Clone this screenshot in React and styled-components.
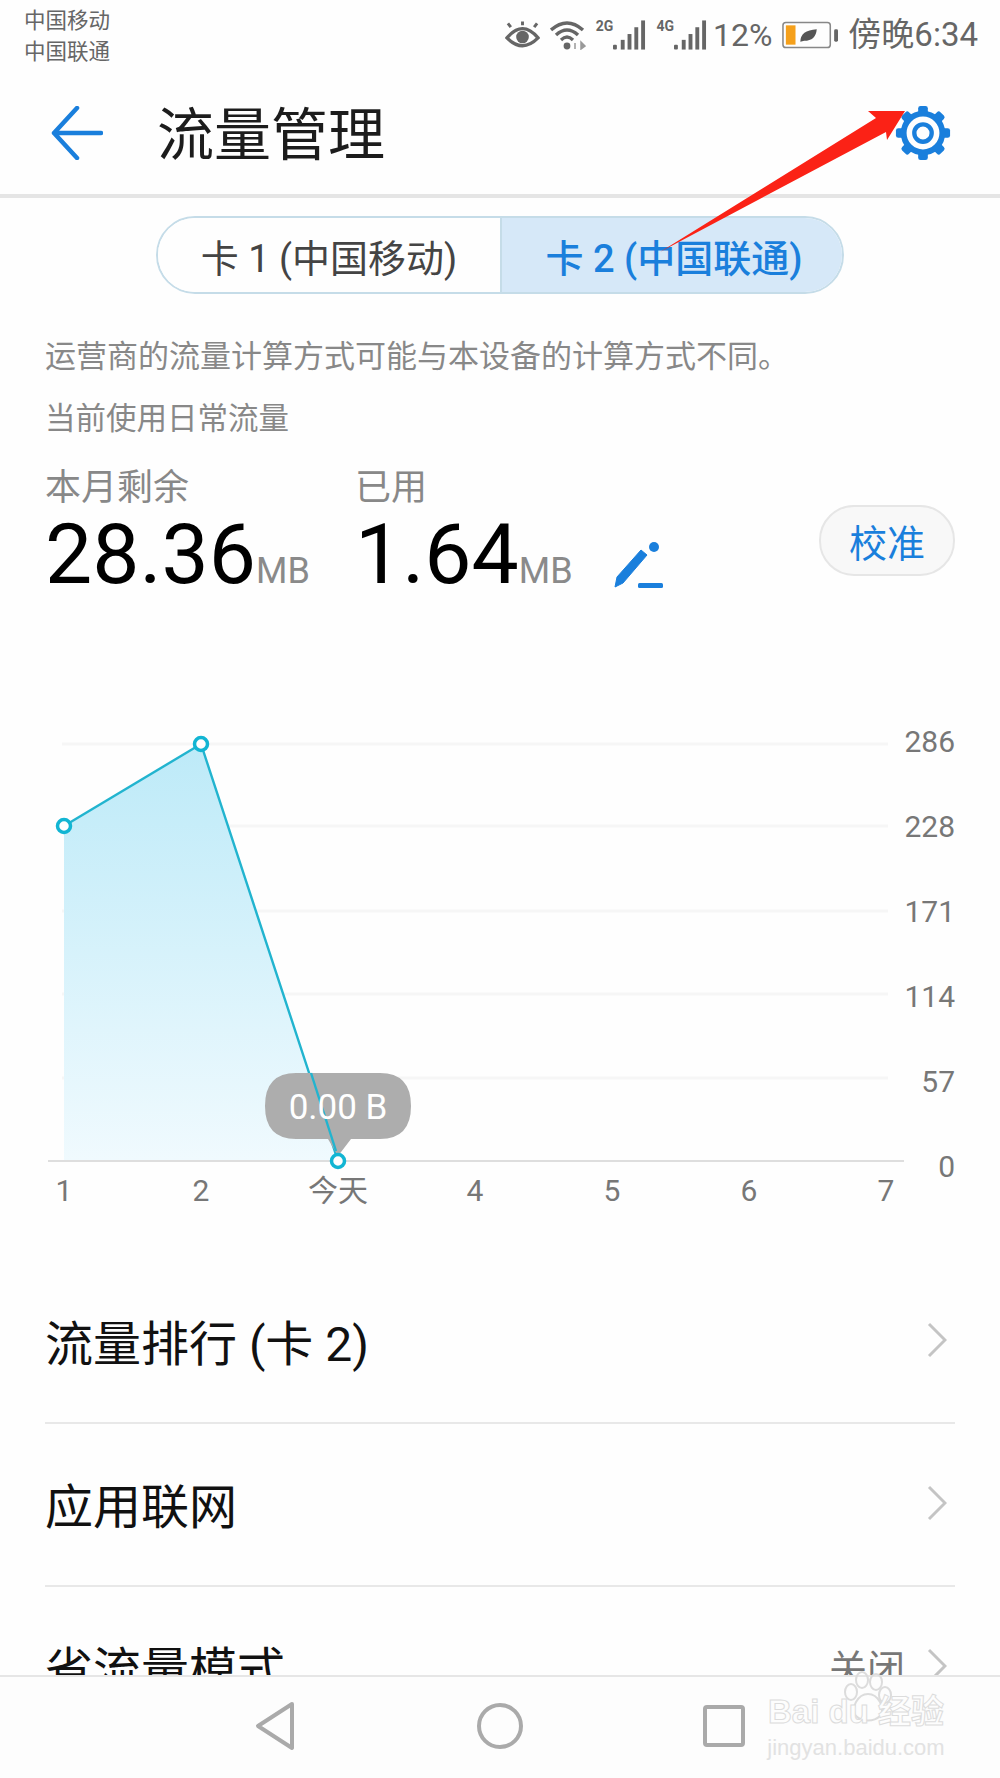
import React from "react";
import styled, { createGlobalStyle } from "styled-components";

const BLUE = "#1a7fdc";
const TEAL = "#12b5d3";

const GlobalStyle = createGlobalStyle`
  html, body {
    margin: 0;
    padding: 0;
    background: #fefefe;
  }
  * {
    box-sizing: border-box;
  }
`;

const gridRows = [
  { label: "286", y: 743, textY: 751 },
  { label: "228", y: 825, textY: 836 },
  { label: "171", y: 910, textY: 921 },
  { label: "114", y: 993, textY: 1006 },
  { label: "57", y: 1077, textY: 1091 },
  { label: "0", y: 1160, textY: 1176 },
];

const xLabels = ["1", "2", "今天", "4", "5", "6", "7"];

function Eye() {
  return (
    <svg width="35" height="28" viewBox="0 0 36 28">
      <path d="M2 17 Q18 -2 34 17 Q18 33 2 17 Z" fill="none" stroke="#666" strokeWidth="3.4" />
      <circle cx="18" cy="16" r="6.5" fill="#666" />
      <path d="M6 6 L3 2 M18 4 L18 0 M30 6 L33 2" stroke="#666" strokeWidth="3" />
    </svg>
  );
}

function Wifi() {
  return (
    <svg width="36" height="30" viewBox="0 0 36 30">
      <path d="M1 10 Q17 -4 33 10" fill="none" stroke="#666" strokeWidth="3.4" />
      <path d="M6 15 Q17 5 28 15" fill="none" stroke="#666" strokeWidth="3.4" />
      <path d="M11 20 Q17 14 23 20" fill="none" stroke="#666" strokeWidth="3.2" />
      <circle cx="17" cy="26" r="3.4" fill="#666" />
      <path d="M25 23 V29 M31 22 L35 26 L31 29 Z" stroke="#999" strokeWidth="1.5" fill="#999" />
    </svg>
  );
}

function Signal() {
  return (
    <svg width="33" height="30" viewBox="0 0 34 30">
      <rect x="0" y="25" width="4" height="5" rx="1" fill="#666" />
      <rect x="8" y="20" width="4" height="10" fill="#666" />
      <rect x="15" y="14" width="4" height="16" fill="#666" />
      <rect x="22" y="7" width="4" height="23" fill="#666" />
      <rect x="29" y="0" width="4" height="30" fill="#666" />
    </svg>
  );
}

function Battery() {
  return (
    <svg width="56" height="28" viewBox="0 0 58 28">
      <rect x="1" y="1" width="49" height="26" rx="3" fill="none" stroke="#888" strokeWidth="1.6" />
      <rect x="4" y="4" width="10" height="20" fill="#f5a01b" />
      <path d="M19 21 Q19 9 36 8 Q35 20 23 20 Z" fill="#555" />
      <rect x="54" y="8" width="4" height="13" rx="1.5" fill="#666" />
    </svg>
  );
}

function BackArrow() {
  return (
    <svg width="52" height="54" viewBox="0 0 52 54">
      <path
        d="M26 2 L3 27 L26 52 M3 27 H50"
        fill="none"
        stroke={BLUE}
        strokeWidth="4.5"
        strokeLinecap="round"
        strokeLinejoin="round"
      />
    </svg>
  );
}

function Gear() {
  const angles = [0, 45, 90, 135, 180, 225, 270, 315];
  return (
    <svg width="58" height="58" viewBox="0 0 60 60">
      {angles.map((a) => (
        <rect key={a} x="25" y="2" width="10" height="10" rx="2.5" fill={BLUE} transform={`rotate(${a} 30 30)`} />
      ))}
      <circle cx="30" cy="30" r="20" fill="#fefefe" stroke={BLUE} strokeWidth="6" />
      <circle cx="30" cy="30" r="9" fill="none" stroke={BLUE} strokeWidth="4.5" />
    </svg>
  );
}

function Pencil() {
  return (
    <svg width="54" height="50" viewBox="0 0 54 50">
      <path d="M3 47 L5 37 L29 10 L35 15 L11 43 Z" fill={BLUE} stroke={BLUE} strokeWidth="1" strokeLinejoin="round" />
      <circle cx="42" cy="7" r="5" fill={BLUE} />
      <rect x="26" y="43" width="25" height="5" rx="1.5" fill={BLUE} />
    </svg>
  );
}

function Chevron() {
  return (
    <svg width="20" height="36" viewBox="0 0 20 36">
      <path d="M2 2 L18 18 L2 34" fill="none" stroke="#c4c4c4" strokeWidth="3" />
    </svg>
  );
}

function UsageChart() {
  return (
    <ChartSvg viewBox="0 720 1000 490">
      <defs>
        <linearGradient id="areaFill" x1="0" y1="0" x2="0" y2="1">
          <stop offset="0" stopColor="#bdeaf8" />
          <stop offset="1" stopColor="#f0fafe" />
        </linearGradient>
      </defs>
      {gridRows.slice(0, 5).map((row) => (
        <line key={row.label} x1="62" x2="888" y1={row.y} y2={row.y} stroke="#f6f6f6" strokeWidth="3" />
      ))}
      <path d="M64 825 L201 743 L338 1160 L64 1160 Z" fill="url(#areaFill)" />
      <line x1="48" x2="904" y1="1160" y2="1160" stroke="#dedede" strokeWidth="2" />
      <polyline points="64,825 201,743 338,1160" fill="none" stroke="#22b4cf" strokeWidth="2.4" />
      <path
        d="M296 1072 H380 Q411 1072 411 1105 Q411 1138 380 1138 H351 L338 1155 L328 1138 H296 Q265 1138 265 1105 Q265 1072 296 1072 Z"
        fill="#adadad"
      />
      <line x1="311" x2="336" y1="1072" y2="1150" stroke="#22b4cf" strokeWidth="2.4" />
      <text x="338" y="1118" textAnchor="middle" fontFamily="Roboto, sans-serif" fontSize="35" fill="#fff">
        0.00 B
      </text>
      <circle cx="64" cy="825" r="6.5" fill="#fefefe" stroke={TEAL} strokeWidth="3.5" />
      <circle cx="201" cy="743" r="6.5" fill="#fefefe" stroke={TEAL} strokeWidth="3.5" />
      <circle cx="338" cy="1160" r="6.5" fill="#fefefe" stroke={TEAL} strokeWidth="3.5" />
      {gridRows.map((row) => (
        <text key={row.label} x="955" y={row.textY} textAnchor="end" fontFamily="Roboto, sans-serif" fontSize="30" fill="#777">
          {row.label}
        </text>
      ))}
      {xLabels.map((label, i) => (
        <text
          key={label}
          x={64 + i * 137}
          y="1200"
          textAnchor="middle"
          fontFamily="Roboto, 'Noto Sans CJK SC', sans-serif"
          fontSize="30"
          fill="#777"
        >
          {label}
        </text>
      ))}
    </ChartSvg>
  );
}

export default function App() {
  return (
    <>
      <GlobalStyle />
      <Page>
        <StatusBar>
          <Carriers>
            <span>中国移动</span>
            <span>中国联通</span>
          </Carriers>
          <StatusIcons>
            <Eye />
            <Wifi />
            <NetTag>2G</NetTag>
            <Signal />
            <NetTag>4G</NetTag>
            <Signal />
            <StatusText>12%</StatusText>
            <Battery />
            <StatusText $wide>傍晚6:34</StatusText>
          </StatusIcons>
        </StatusBar>

        <Toolbar>
          <IconSlot>
            <BackArrow />
          </IconSlot>
          <Title>流量管理</Title>
          <IconSlot $end>
            <Gear />
          </IconSlot>
        </Toolbar>

        <Content>
          <SegmentWrap>
            <Segment>
              <SegmentItem>卡 1 (中国移动)</SegmentItem>
              <SegmentItem $active>卡 2 (中国联通)</SegmentItem>
            </Segment>
          </SegmentWrap>

          <Note>运营商的流量计算方式可能与本设备的计算方式不同。</Note>
          <Note $second>当前使用日常流量</Note>

          <StatsRow>
            <Stat $width={310}>
              <StatLabel>本月剩余</StatLabel>
              <StatValue>
                28.36<Unit>MB</Unit>
              </StatValue>
            </Stat>
            <Stat $width={257}>
              <StatLabel>已用</StatLabel>
              <StatValue>
                1.64<Unit>MB</Unit>
              </StatValue>
            </Stat>
            <PencilSlot>
              <Pencil />
            </PencilSlot>
            <CalibrateButton>校准</CalibrateButton>
          </StatsRow>

          <UsageChart />

          <MenuList>
            <MenuRow>
              <MenuTitle>流量排行 (卡 2)</MenuTitle>
              <Chevron />
            </MenuRow>
            <MenuRow>
              <MenuTitle>应用联网</MenuTitle>
              <Chevron />
            </MenuRow>
            <MenuRow>
              <MenuTitle>省流量模式</MenuTitle>
              <MenuRight>
                <MenuValue>关闭</MenuValue>
                <Chevron />
              </MenuRight>
            </MenuRow>
          </MenuList>
        </Content>

        <NavBar>
          <svg width="44" height="50" viewBox="0 0 44 50">
            <path d="M38 3 L4 25 L38 47 Z" fill="none" stroke="#aaa" strokeWidth="4" strokeLinejoin="round" />
          </svg>
          <svg width="48" height="48" viewBox="0 0 48 48">
            <circle cx="24" cy="24" r="21" fill="none" stroke="#aaa" strokeWidth="4" />
          </svg>
          <svg width="44" height="44" viewBox="0 0 44 44">
            <rect x="3" y="3" width="38" height="38" rx="2" fill="none" stroke="#aaa" strokeWidth="4" />
          </svg>
        </NavBar>

        <Watermark>
          <WatermarkPaw viewBox="0 0 56 56">
            <g fill="none" stroke="#dcdcdc" strokeWidth="2">
              <ellipse cx="13" cy="22" rx="6" ry="8" />
              <ellipse cx="24" cy="10" rx="6" ry="8" />
              <ellipse cx="38" cy="12" rx="6" ry="8" />
              <ellipse cx="47" cy="25" rx="6" ry="8" />
              <path d="M30 24 C20 24 12 38 18 46 C24 52 36 52 42 46 C48 38 40 24 30 24 Z" />
            </g>
          </WatermarkPaw>
          <WatermarkTitle>Bai du 经验</WatermarkTitle>
          <WatermarkUrl>jingyan.baidu.com</WatermarkUrl>
        </Watermark>

        <ArrowOverlay viewBox="0 0 1000 300">
          <polygon points="660,252 876,118 868,111 905,111 887,140 886,132" fill="#fb2216" />
        </ArrowOverlay>
      </Page>
    </>
  );
}

const Page = styled.div`
  position: relative;
  width: 1000px;
  height: 1778px;
  display: flex;
  flex-direction: column;
  overflow: hidden;
  background: #fefefe;
  font-family: Roboto, "Noto Sans CJK SC", sans-serif;
`;

const StatusBar = styled.header`
  height: 70px;
  padding: 5px 22px 0 24px;
  display: flex;
  justify-content: space-between;
`;

const Carriers = styled.div`
  display: flex;
  flex-direction: column;
  font-size: 21.5px;
  line-height: 31px;
  color: #666;
`;

const StatusIcons = styled.div`
  height: 60px;
  display: flex;
  align-items: center;
  gap: 10px;
  color: #666;
`;

const NetTag = styled.span`
  align-self: flex-start;
  margin: 13px -10px 0 0;
  font-size: 14px;
  line-height: 16px;
  font-weight: 700;
  color: #666;
`;

const StatusText = styled.span`
  margin-left: ${(p) => (p.$wide ? "0" : "-4px")};
  font-size: ${(p) => (p.$wide ? "33px" : "32px")};
  line-height: 40px;
`;

const Toolbar = styled.div`
  height: 128px;
  padding: 8px 48px 0 51px;
  display: flex;
  align-items: center;
  border-bottom: 4px solid #e5e5e5;
`;

const IconSlot = styled.div`
  display: flex;
  margin-left: ${(p) => (p.$end ? "auto" : "0")};
  margin-bottom: 6px;
`;

const Title = styled.h1`
  margin: 0 0 0 54px;
  font-size: 57px;
  line-height: 70px;
  font-weight: 400;
  color: #1c1c1c;
`;

const Content = styled.main`
  flex: 1;
  min-height: 0;
  overflow: hidden;
  padding: 0 45px;
`;

const SegmentWrap = styled.div`
  padding-top: 18px;
  display: flex;
  justify-content: center;
`;

const Segment = styled.div`
  width: 688px;
  height: 78px;
  display: grid;
  grid-template-columns: 342px 346px;
  border: 2px solid #c5dce8;
  border-radius: 39px;
  overflow: hidden;
`;

const SegmentItem = styled.div`
  display: flex;
  align-items: center;
  justify-content: center;
  font-size: 38px;
  color: ${(p) => (p.$active ? "#1a7fdc" : "#444")};
  font-weight: ${(p) => (p.$active ? 500 : 400)};
  background: ${(p) => (p.$active ? "#d6e8f8" : "#fefefe")};
  border-left: ${(p) => (p.$active ? "2px solid #c5dce8" : "none")};
`;

const Note = styled.p`
  margin: ${(p) => (p.$second ? "22px" : "43px")} 0 0;
  font-size: ${(p) => (p.$second ? "30.5px" : "31px")};
  line-height: 40px;
  color: #888;
`;

const StatsRow = styled.div`
  margin-top: 26px;
  display: flex;
  align-items: flex-start;
`;

const Stat = styled.div`
  width: ${(p) => p.$width}px;
  display: flex;
  flex-direction: column;
`;

const StatLabel = styled.span`
  font-size: 36px;
  line-height: 46px;
  color: #888;
`;

const StatValue = styled.span`
  font-size: 84px;
  line-height: 88px;
  color: #000;
`;

const Unit = styled.span`
  font-size: 36px;
  color: #8a8a8a;
`;

const PencilSlot = styled.div`
  margin-top: 75px;
  display: flex;
`;

const CalibrateButton = styled.button`
  margin: 40px 0 0 auto;
  width: 136px;
  height: 71px;
  padding: 0;
  background: #f8f8f8;
  border: 2px solid #e6e6e6;
  border-radius: 35px;
  font-family: inherit;
  font-size: 38px;
  color: #1a7fdc;
`;

const ChartSvg = styled.svg`
  display: block;
  width: 1000px;
  height: 490px;
  margin: 106px 0 0 -45px;
`;

const MenuList = styled.div`
  margin-top: 50px;
  display: flex;
  flex-direction: column;
`;

const MenuRow = styled.div`
  height: 163px;
  padding: 0 8px 4px 0;
  display: flex;
  align-items: center;
  justify-content: space-between;
  border-bottom: 2px solid #e8e8e8;
`;

const MenuTitle = styled.span`
  font-size: 48px;
  color: #111;
`;

const MenuRight = styled.div`
  display: flex;
  align-items: center;
  gap: 22px;
`;

const MenuValue = styled.span`
  font-size: 38px;
  color: #777;
`;

const NavBar = styled.nav`
  height: 103px;
  padding-bottom: 4px;
  display: flex;
  align-items: center;
  justify-content: center;
  gap: 178px;
  background: #fdfdfd;
  border-top: 2px solid #e6e6e6;
`;

const Watermark = styled.div`
  position: absolute;
  left: 766px;
  top: 1670px;
  width: 180px;
  display: flex;
  flex-direction: column;
  align-items: center;
  pointer-events: none;
`;

const WatermarkPaw = styled.svg`
  width: 56px;
  height: 56px;
  margin: 0 0 -34px 20px;
`;

const WatermarkTitle = styled.span`
  font-family: "Liberation Sans", "Noto Sans CJK SC", sans-serif;
  font-size: 33px;
  line-height: 40px;
  font-weight: 700;
  color: #fdfdfd;
  -webkit-text-stroke: 1px #dcdcdc;
  white-space: nowrap;
`;

const WatermarkUrl = styled.span`
  margin-top: 3px;
  font-family: "Liberation Sans", sans-serif;
  font-size: 22px;
  line-height: 26px;
  color: #e2e2e2;
  white-space: nowrap;
`;

const ArrowOverlay = styled.svg`
  position: absolute;
  left: 0;
  top: 0;
  width: 1000px;
  height: 300px;
  pointer-events: none;
`;
